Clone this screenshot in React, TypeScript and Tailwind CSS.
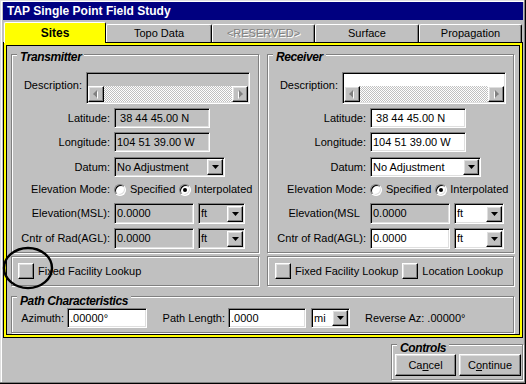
import React from 'react';

// Win95-style bevels used by every field, button and group frame
const sunken =
  'border border-t-[#808080] border-l-[#808080] border-r-white border-b-white shadow-[inset_1px_1px_#000,inset_-1px_-1px_#dfdfdf]';
const raised =
  'border border-t-white border-l-white border-r-black border-b-black shadow-[inset_-1px_-1px_#808080,inset_1px_1px_#dfdfdf]';
const etched = 'border border-[#808080] shadow-[inset_1px_1px_#fff,1px_1px_#fff]';

function DownArrow() {
  return (
    <svg width="7" height="4" viewBox="0 0 7 4">
      <path d="M0 0h7L3.5 4z" fill="#000" />
    </svg>
  );
}

function ScrollArrow({ right }: { right?: boolean }) {
  return (
    <div className={`${raised} w-[16px] h-full bg-[#c0c0c0] flex items-center justify-center shrink-0`}>
      <svg width="6" height="9" viewBox="0 0 6 9" className={right ? 'scale-x-[-1]' : ''}>
        <path d="M5 1v8L1 5z" fill="#fff" />
        <path d="M4 0v8L0 4z" fill="#808080" />
      </svg>
    </div>
  );
}

function Dropdown({ value, className }: { value: string; className: string }) {
  return (
    <div className={`${sunken} flex items-center pl-[2px] ${className}`}>
      <span className="flex-1 whitespace-nowrap">{value}</span>
      <div className={`${raised} w-[16px] h-[16px] mr-[1px] bg-[#c0c0c0] flex items-center justify-center`}>
        <DownArrow />
      </div>
    </div>
  );
}

function Field({ value, className }: { value: string; className: string }) {
  return <div className={`${sunken} flex items-center pl-[2px] whitespace-nowrap ${className}`}>{value}</div>;
}

function Radio({ on }: { on?: boolean }) {
  return (
    <div className="w-[12px] h-[12px] rounded-full bg-white border border-t-[#808080] border-l-[#808080] border-r-white border-b-white shadow-[inset_1px_1px_#000,inset_-1px_-1px_#dfdfdf] flex items-center justify-center shrink-0">
      {on && <div className="w-[4px] h-[4px] rounded-full bg-black" />}
    </div>
  );
}

function CheckBox() {
  return <div className={`${raised} w-[16px] h-[16px] bg-[#c0c0c0] shrink-0`} />;
}

function Group({
  title,
  labelClass,
  className,
  children,
}: {
  title: string;
  labelClass: string;
  className: string;
  children?: React.ReactNode;
}) {
  return (
    <div className={`relative ${etched} ${className}`}>
      <span
        className={`absolute left-[5px] px-[3px] bg-[#c0c0c0] text-[12px] leading-[12px] font-bold italic tracking-[-0.4px] whitespace-nowrap ${labelClass}`}
      >
        {title}
      </span>
      {children}
    </div>
  );
}

function SitePanel({ rx }: { rx?: boolean }) {
  const bg = rx ? 'bg-white' : 'bg-[#c0c0c0]';
  const unitW = rx ? 'w-[50px]' : 'w-[47px]';
  return (
    <div className={rx ? 'w-[247px] ml-[8px]' : 'w-[248px]'}>
      <Group title={rx ? 'Receiver' : 'Transmitter'} labelClass="top-[-4px]" className="h-[199px] pt-[17px]">
        <div className="flex">
          <div className="w-[70px] text-right pt-[5px]">Description:</div>
          <div className={`${sunken} ${bg} ml-[4px] w-[164px] h-[32px] p-[1px] flex flex-col`}>
            <div className="flex-1" />
            <div className="h-[16px] flex">
              <ScrollArrow />
              <div className="flex-1 bg-[repeating-conic-gradient(#fff_0_25%,#c0c0c0_0_50%)] bg-[length:2px_2px]" />
              <ScrollArrow right />
            </div>
          </div>
        </div>

        <div className="flex items-center mt-[4px] h-[20px]">
          <div className="w-[98px] text-right">Latitude:</div>
          <Field value={'\u00a038 44 45.00 N'} className={`ml-[4px] w-[96px] h-[20px] ${bg}`} />
        </div>
        <div className="flex items-center mt-[4px] h-[20px]">
          <div className="w-[98px] text-right">Longitude:</div>
          <Field value="104 51 39.00 W" className={`ml-[4px] w-[96px] h-[20px] ${bg}`} />
        </div>
        <div className="flex items-center mt-[5px] h-[20px]">
          <div className="w-[98px] text-right">Datum:</div>
          <Dropdown value="No Adjustment" className={`ml-[4px] w-[111px] h-[20px] ${bg}`} />
        </div>
        <div className="flex items-center mt-[6px] h-[13px] whitespace-nowrap">
          <div className="w-[98px] text-right">Elevation Mode:</div>
          <div className="ml-[4px]">
            <Radio />
          </div>
          <span className="ml-[4px]">Specified</span>
          <div className="ml-[4px]">
            <Radio on />
          </div>
          <span className="ml-[3px]">Interpolated</span>
        </div>
        <div className="flex items-center mt-[7px] h-[21px]">
          <div className={`w-[98px] text-right whitespace-nowrap ${rx ? 'pr-[6px]' : ''}`}>
            {rx ? 'Elevation(MSL' : 'Elevation(MSL):'}
          </div>
          <Field value="0.0000" className="ml-[4px] w-[80px] h-[21px] bg-[#c0c0c0]" />
          <Dropdown value="ft" className={`ml-[4px] ${unitW} h-[21px] ${bg}`} />
        </div>
        <div className="flex items-center mt-[4px] h-[21px]">
          <div className="w-[98px] text-right whitespace-nowrap">Cntr of Rad(AGL):</div>
          <Field value="0.0000" className={`ml-[4px] w-[80px] h-[21px] ${bg}`} />
          <Dropdown value="ft" className={`ml-[4px] ${unitW} h-[21px] ${bg}`} />
        </div>
      </Group>

      <div className={`${etched} h-[30px] mt-[3px] flex items-center whitespace-nowrap ${rx ? 'pl-[7px]' : 'pl-[6px]'}`}>
        <CheckBox />
        <span className="ml-[4px]">Fixed Facility Lookup</span>
        {rx && (
          <>
            <div className="ml-[4px]">
              <CheckBox />
            </div>
            <span className="ml-[4px]">Location Lookup</span>
          </>
        )}
      </div>
    </div>
  );
}

const tabs = [
  { label: 'Sites', w: 'w-[102px]' },
  { label: 'Topo Data', w: 'w-[106px]' },
  { label: '<RESERVED>', w: 'w-[103px]' },
  { label: 'Surface', w: 'w-[104px]' },
  { label: 'Propagation', w: 'w-[103px]' },
];

export default function App() {
  return (
    <div className="relative w-[526px] h-[384px] overflow-hidden bg-[#c0c0c0] text-[11px] text-black font-['Liberation_Sans',Arial,sans-serif] shadow-[inset_-1px_-1px_#000,inset_-2px_-2px_#808080,inset_1px_1px_#dfdfdf,inset_2px_2px_#fff]">
      {/* title bar */}
      <div className="mt-[2px] ml-[3px] mr-[3px] h-[18px] bg-[#000080] text-white text-[12px] font-bold flex items-center pl-[4px]">
        TAP Single Point Field Study
      </div>

      {/* tab strip */}
      <div className="relative z-10 mt-[2px] ml-[4px] h-[20px] flex items-end">
        {tabs.map((t, i) =>
          i === 0 ? (
            <div
              key={t.label}
              className={`${t.w} h-[21px] mb-[-1px] bg-[#ffff00] border-t border-l border-white border-r border-r-black rounded-t-[2px] flex items-center justify-center text-[12px] font-bold`}
            >
              {t.label}
            </div>
          ) : (
            <div
              key={t.label}
              className={`${t.w} h-[18px] border-t border-l border-white border-r border-r-black shadow-[inset_-1px_0_#808080] rounded-t-[2px] flex items-center justify-center ${
                i === 2 ? 'text-[#808080] [text-shadow:1px_1px_0_#fff]' : ''
              }`}
            >
              {t.label}
            </div>
          ),
        )}
      </div>

      {/* yellow-framed page */}
      <div className="ml-[3px] w-[520px] h-[296px] border border-black shadow-[inset_0_0_0_2px_#ffff00,inset_0_0_0_3px_#000] pt-[11px] pl-[7px]">
        <div className="flex">
          <SitePanel />
          <SitePanel rx />
        </div>

        <Group title="Path Characteristics" labelClass="top-[-2px]" className="mt-[10px] w-[503px] h-[37px] pt-[11px]">
          <div className="flex items-center h-[20px] whitespace-nowrap">
            <div className="w-[52px] text-right">Azimuth:</div>
            <Field value=".00000°" className="ml-[3px] w-[80px] h-[20px] bg-white" />
            <div className="w-[78px] text-right">Path Length:</div>
            <Field value=".0000" className="ml-[3px] w-[78px] h-[20px] bg-white" />
            <Dropdown value="mi" className="ml-[5px] w-[39px] h-[20px] bg-white" />
            <span className="ml-[15px]">Reverse Az: .00000°</span>
          </div>
        </Group>
      </div>

      {/* controls */}
      <div className="flex justify-end pr-[3px] mt-[6px]">
        <Group title="Controls" labelClass="top-[-3px]" className="w-[132px] h-[36px] pt-[9px] pl-[3px]">
          <div className="flex gap-[3px]">
            <button className={`${raised} w-[61px] h-[22px] bg-[#c0c0c0]`}>
              Ca<span className="underline">n</span>cel
            </button>
            <button className={`${raised} w-[62px] h-[22px] bg-[#c0c0c0]`}>
              C<span className="underline">o</span>ntinue
            </button>
          </div>
        </Group>
      </div>

      {/* hand-drawn annotation circle over the Fixed Facility checkbox */}
      <svg className="absolute left-[2px] top-[246px]" width="52" height="44" viewBox="0 0 52 44">
        <ellipse cx="26" cy="22" rx="24" ry="20" fill="none" stroke="#000" strokeWidth="2.4" />
      </svg>
    </div>
  );
}
